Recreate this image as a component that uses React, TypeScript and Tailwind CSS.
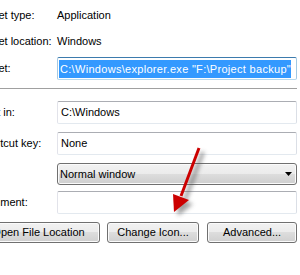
import React from "react";

const font = { fontFamily: '"Liberation Sans", Arial, sans-serif' };

function TextBox({ value, focused }: { value?: string; focused?: boolean }) {
  return (
    <div
      className={
        "w-[240px] h-[23px] rounded-[2px] border bg-white flex items-center pl-[1px] " +
        (focused
          ? "border-t-[#3d7bad] border-l-[#a4c9e3] border-r-[#a4c9e3] border-b-[#b7d9ed]"
          : "border-t-[#abadb3] border-l-[#e2e3ea] border-r-[#dbdfe6] border-b-[#e3e9ef]")
      }
    >
      {value !== undefined && focused ? (
        <span className="bg-[#3399ff] text-white leading-[18px] pl-[1px] tracking-[0.3px]">{value}</span>
      ) : (
        <span className="text-black pl-[2px]">{value}</span>
      )}
    </div>
  );
}

function Btn({ label, w }: { label: string; w: string }) {
  return (
    <div
      className={
        "h-[21px] rounded-[3px] border border-[#707070] flex items-center justify-center text-black shadow-[inset_0_0_0_1px_#fbfbfb] bg-[linear-gradient(#f2f2f2_0%,#ebebeb_50%,#dddddd_50%,#cfcfcf_100%)] " +
        w
      }
    >
      {label}
    </div>
  );
}

export default function App() {
  return (
    <div
      className="relative w-[300px] h-[275px] overflow-hidden bg-white text-[11px] text-black"
      style={font}
    >
      <div className="flex flex-col ml-[-23px] w-[320px]">
        <div className="flex items-center h-[26px] mt-[2px]">
          <div className="w-[80px]">Target type:</div>
          <div>Application</div>
        </div>
        <div className="flex items-center h-[26px]">
          <div className="w-[80px]">Target location:</div>
          <div>Windows</div>
        </div>
        <div className="flex items-center mt-[3px]">
          <div className="w-[80px]">Target:</div>
          <TextBox value={'C:\\Windows\\explorer.exe "F:\\Project backup"'} focused />
        </div>
        <div className="mt-[8px] h-[2px] border-t border-t-[#a0a0a0] border-b border-b-white w-[320px]" />
        <div className="flex items-center mt-[11px]">
          <div className="w-[80px]">Start in:</div>
          <TextBox value="C:\Windows" />
        </div>
        <div className="flex items-center mt-[8px]">
          <div className="w-[80px]">Shortcut key:</div>
          <TextBox value="None" />
        </div>
        <div className="flex items-center mt-[8px]">
          <div className="w-[80px]">Run:</div>
          <div className="relative w-[240px] h-[22px] rounded-[3px] border border-[#707070] shadow-[inset_0_0_0_1px_#fbfbfb] bg-[linear-gradient(#f2f2f2_0%,#ebebeb_50%,#dddddd_50%,#cfcfcf_100%)] flex items-center pl-[2px]">
            <span>Normal window</span>
            <svg
              className="absolute right-[4px] top-[8px]"
              width="7"
              height="4"
              viewBox="0 0 7 4"
            >
              <polygon points="0,0 7,0 3.5,4" fill="#000" />
            </svg>
          </div>
        </div>
        <div className="flex items-center mt-[6px]">
          <div className="w-[80px]">Comment:</div>
          <TextBox value="" />
        </div>
        <div className="flex mt-[8px]">
          <Btn label="Open File Location" w="w-[123px]" />
          <div className="ml-[7px]">
            <Btn label="Change Icon..." w="w-[92px]" />
          </div>
          <div className="ml-[8px]">
            <Btn label="Advanced..." w="w-[90px]" />
          </div>
        </div>
      </div>

      <svg
        className="absolute left-[160px] top-[140px]"
        width="60"
        height="85"
        viewBox="0 0 60 85"
      >
        <defs>
          <filter id="blur" x="-50%" y="-50%" width="200%" height="200%">
            <feGaussianBlur stdDeviation="2" />
          </filter>
        </defs>
        <g transform="translate(4,4)" filter="url(#blur)" opacity="0.55">
          <line x1="39" y1="8" x2="21" y2="56" stroke="#555" strokeWidth="4" />
          <polygon points="13,54 29,60 14,72" fill="#555" />
        </g>
        <line x1="39" y1="8" x2="21" y2="56" stroke="#cc0000" strokeWidth="3" />
        <polygon points="13,54 29,60 14,72" fill="#cc0000" />
      </svg>
    </div>
  );
}
